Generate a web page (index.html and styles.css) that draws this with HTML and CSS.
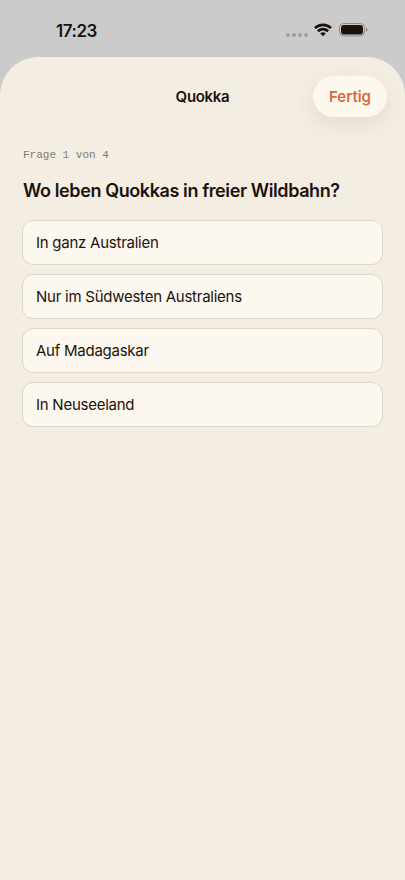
FILE: index.html
```html
<!DOCTYPE html>
<html lang="de">
<head>
<meta charset="utf-8">
<meta name="viewport" content="width=device-width, initial-scale=1">
<title>Quokka</title>
<link rel="stylesheet" href="styles.css">
</head>
<body>
<div class="status">
  <span class="time">17:23</span>
  <div class="indicators">
    <div class="dots"><i></i><i></i><i></i><i></i></div>
    <svg class="wifi" width="18" height="14" viewBox="0 0 18 14"><g fill="none" stroke="#1c120c" stroke-width="2.7"><path d="M1 5.1C5.5.7 12.5.7 17 5.1"/><path d="M3.9 8.3C6.8 5.5 11.2 5.5 14.1 8.3"/></g><path fill="#1c120c" d="M9 13.2 6.2 10.4Q9 8.2 11.8 10.4Z"/></svg>
    <svg class="battery" width="29" height="14" viewBox="0 0 29 14"><rect x=".5" y=".5" width="25" height="12.5" rx="4" fill="none" stroke="#8c8986"/><rect x="2" y="2" width="22" height="9.5" rx="2.8" fill="#1c120c"/><path d="M27 4.7v4.2q1.5-.6 1.5-2.1T27 4.7" fill="#8c8986"/></svg>
  </div>
</div>
<main class="sheet">
  <header class="bar">
    <h1 class="title">Quokka</h1>
    <button class="done">Fertig</button>
  </header>
  <p class="progress">Frage 1 von 4</p>
  <h2 class="question">Wo leben Quokkas in freier Wildbahn?</h2>
  <div class="answers">
    <button class="answer"><span class="a1">In ganz Australien</span></button>
    <button class="answer"><span class="a2">Nur im Südwesten Australiens</span></button>
    <button class="answer"><span class="a3">Auf Madagaskar</span></button>
    <button class="answer"><span class="a4">In Neuseeland</span></button>
  </div>
</main>
</body>
</html>
```

FILE: styles.css
```css
* { box-sizing: border-box; }
body { margin: 0; height: 880px; display: flex; flex-direction: column; overflow: hidden; background: #cbcbcb; color: #1c120c; font-family: Inter, "Liberation Sans", sans-serif; }
h1, h2, p { margin: 0; }
button { font: inherit; color: inherit; }
.status { height: 57px; flex: none; display: flex; justify-content: space-between; padding: 22px 37px 0 56px; }
.time { font-size: 17px; line-height: 18px; font-weight: 600; letter-spacing: -0.45px; }
.indicators { display: flex; align-items: flex-start; }
.dots { display: flex; gap: 2px; padding-top: 11px; margin-right: 6px; }
.dots i { width: 4px; height: 4px; border-radius: 50%; background: #a59d95; }
.wifi { margin: 1px 7px 0 0; }
.battery { margin-top: 1px; }
.sheet { flex: 1; background: #f4ede1; border-radius: 38px 38px 0 0; padding: 18px 22px 0; overflow: hidden; }
.bar { display: grid; grid-template-columns: 1fr auto 1fr; align-items: center; height: 42px; margin-right: -4px; margin-left: -4px; }
.title { grid-column: 2; font-size: 15px; font-weight: 600; letter-spacing: -0.3px; }
.done { justify-self: end; width: 74px; height: 41px; padding: 0; border: 0; border-radius: 21px; background: #fcf8ee; color: #dd6840; font-size: 15px; font-weight: 600; box-shadow: 0 7px 20px rgba(90,80,50,.1); }
.progress { margin: 31px 0 0 1px; font: 11px/14px "Liberation Mono", monospace; color: #817b74; }
.question { margin: 17px 0 0 1px; font-size: 18px; line-height: 24px; font-weight: 600; letter-spacing: -0.4px; white-space: nowrap; }
.answers { display: grid; gap: 9px; margin-top: 17px; }
.answer { height: 45px; padding: 0 13px; border: 1px solid #ddd7c9; border-radius: 11px; background: #fcf8ef; font-size: 15px; text-align: left; letter-spacing: -0.25px; }
```
